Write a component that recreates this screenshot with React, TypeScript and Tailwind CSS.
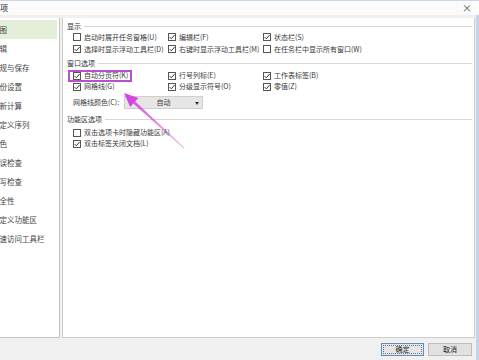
import React from "react";

const font = { fontFamily: '"Noto Sans CJK SC", "Noto Sans", sans-serif' };

const navItems = [
  "视图",
  "编辑",
  "常规与保存",
  "备份设置",
  "重新计算",
  "自定义序列",
  "颜色",
  "错误检查",
  "拼写检查",
  "安全性",
  "自定义功能区",
  "快速访问工具栏",
];

function Checkbox({ checked }: { checked?: boolean }) {
  return (
    <span className="relative w-[8px] h-[8px] shrink-0 border border-[#555] bg-white">
      {checked && (
        <svg viewBox="0 0 8 8" className="absolute -left-px -top-px w-[8px] h-[8px]">
          <path d="M1.6 4.1 L3.3 5.8 L6.6 2" fill="none" stroke="#333" strokeWidth="1" />
        </svg>
      )}
    </span>
  );
}

function Option({ label, checked }: { label: string; checked?: boolean }) {
  return (
    <div className="flex items-center gap-[3px] whitespace-nowrap">
      <Checkbox checked={checked} />
      <span>{label}</span>
    </div>
  );
}

function Section({ title, className }: { title: string; className?: string }) {
  return (
    <div className={`flex items-center h-[10px] pl-[4px] pr-[2px] ${className ?? ""}`}>
      <span className="text-[#333]">{title}</span>
      <div className="flex-1 ml-[3px] border-t border-[#d6d6d6]" />
    </div>
  );
}

export default function App() {
  return (
    <div
      className="relative w-[479px] h-[360px] overflow-hidden bg-[#f0f0f0] text-[7px] leading-none text-[#3a3a3a]"
      style={font}
    >
      {/* title bar */}
      <div className="flex items-center justify-between h-[15px] bg-[#fbfbfb] border-t border-[#c9d8e6]">
        <span className="-ml-[8px] text-[8px] text-[#222]">选项</span>
        <span className="mr-[7px] text-[10px] text-[#555]">×</span>
      </div>

      <div className="flex pt-[3px] h-[323px] pr-[4px]">
        {/* left nav */}
        <div className="w-[60px] h-full bg-white border-r border-b border-[#c4c4c4] overflow-hidden pt-[2px]">
          {navItems.map((item, i) => (
            <div
              key={item}
              className={`flex items-center h-[19px] mr-[2px] whitespace-nowrap text-[7.5px] ${
                i === 0 ? "bg-[#e3efd9]" : ""
              }`}
            >
              <span className="-ml-[8px] text-[#444]">{item}</span>
            </div>
          ))}
        </div>

        {/* content */}
        <div className="flex-1 ml-[2px] h-full bg-white border-l border-r border-b border-[#cdcdcd] pt-[3px]">
          <Section title="显示" />
          <div className="grid grid-cols-[95px_95px_1fr] pl-[10px] auto-rows-[12px] items-center">
            <Option label="启动时展开任务窗格(U)" />
            <Option label="编辑栏(F)" checked />
            <Option label="状态栏(S)" checked />
            <Option label="选择时显示浮动工具栏(D)" checked />
            <Option label="右键时显示浮动工具栏(M)" checked />
            <Option label="在任务栏中显示所有窗口(W)" />
          </div>

          <Section title="窗口选项" className="mt-[3px]" />
          <div className="grid grid-cols-[95px_95px_1fr] pl-[10px] auto-rows-[11px] items-center mt-[2px]">
            <Option label="自动分页符(K)" checked />
            <Option label="行号列标(E)" checked />
            <Option label="工作表标签(B)" checked />
            <Option label="网格线(G)" checked />
            <Option label="分级显示符号(O)" checked />
            <Option label="零值(Z)" checked />
          </div>
          <div className="flex items-center pl-[10px] mt-[4px] h-[13px]">
            <span className="w-[51px] whitespace-nowrap">网格线颜色(C):</span>
            <div className="relative flex items-center justify-center w-[79px] h-[13px] bg-[#e6e6e6] border border-[#cfcfcf]">
              <span>自动</span>
              <span className="absolute right-[3px] top-[5px] w-0 h-0 border-l-[2.5px] border-r-[2.5px] border-t-[3px] border-l-transparent border-r-transparent border-t-[#333]" />
            </div>
          </div>

          <Section title="功能区选项" className="mt-[5px]" />
          <div className="pl-[10px] mt-[3px] flex flex-col">
            <div className="h-[11px] flex items-center">
              <Option label="双击选项卡时隐藏功能区(A)" />
            </div>
            <div className="h-[11px] flex items-center">
              <Option label="双击标签关闭文档(L)" checked />
            </div>
          </div>
        </div>
      </div>

      {/* buttons */}
      <div className="flex justify-end gap-[4px] pr-[7px] mt-[5px]">
        <button className="w-[43px] h-[13px] flex items-center justify-center bg-[#e5e5e5] border border-[#5b8fc0] outline outline-1 outline-dotted outline-[#777] -outline-offset-[3px] text-[#222]">
          确定
        </button>
        <button className="w-[44px] h-[13px] flex items-center justify-center bg-[#e1e1e1] border border-[#bdbdbd] text-[#222]">
          取消
        </button>
      </div>

      {/* window edge */}
      <div className="absolute right-0 top-[15px] bottom-0 w-[3px] bg-[#c3d6e8]" />

      {/* annotation: highlight box */}
      <div className="absolute left-[68px] top-[70px] w-[64px] h-[12px] border-2 border-[#b84fcc]" />

      {/* annotation: arrow */}
      <svg className="absolute left-0 top-0 pointer-events-none" width="479" height="360">
        <defs>
          <linearGradient id="fade" x1="124" y1="93" x2="184" y2="148" gradientUnits="userSpaceOnUse">
            <stop offset="0" stopColor="#d347de" stopOpacity="1" />
            <stop offset="1" stopColor="#d347de" stopOpacity="0.35" />
          </linearGradient>
        </defs>
        <polygon
          points="133.3,103.6 135.3,101.4 184.3,147.6 183.7,148.4"
          fill="url(#fade)"
        />
        <polygon points="124,93 138.4,98.1 130.2,106.9" fill="#d347de" />
      </svg>
    </div>
  );
}
